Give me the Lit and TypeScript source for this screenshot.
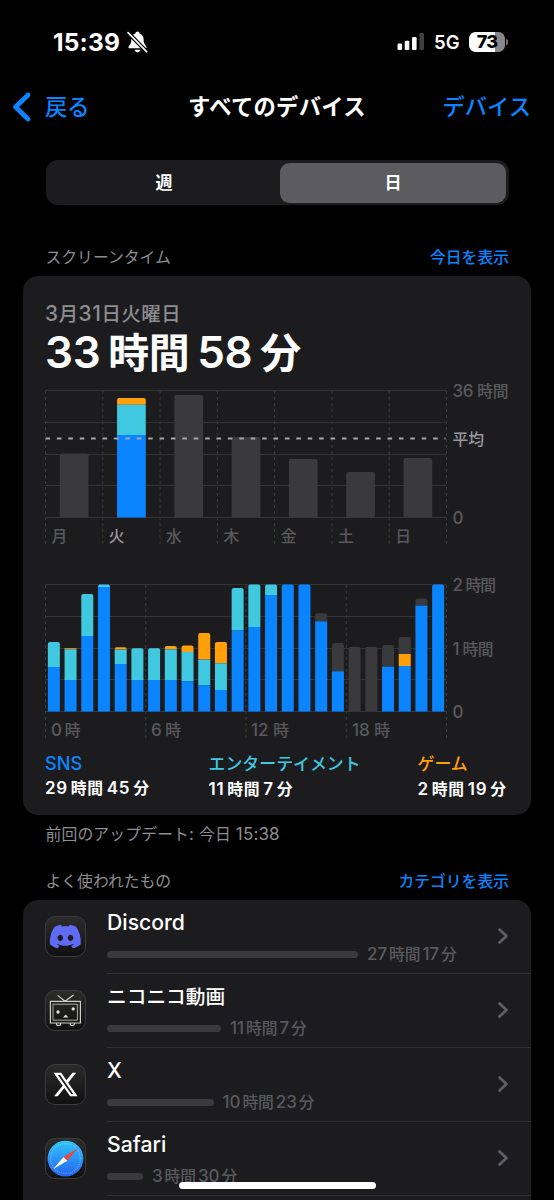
import { LitElement, html, svg, css } from "lit";
import { customElement, property } from "lit/decorators.js";

const BLUE = "#0a84ff";
const TEAL = "#40c8e0";
const ORANGE = "#ff9f0a";
const GRAY = "#3a3a3c";

type Segment = [top: number, color: string];

// Japanese runs are set slightly smaller than the Latin digits around them.
const split = (text: string) => text.match(/[\u3000-\u9fff]+|[^\u3000-\u9fff]+/g) ?? [];
const isJa = (run: string) => /[\u3000-\u9fff]/.test(run);
const mixed = (text: string) => split(text).map((r) => (isJa(r) ? html`<span class="ja">${r}</span>` : r));

const shared = css`
  .ja {
    font-size: 0.93em;
  }
`;

// Segments are listed from the top of the bar down; each runs to the baseline.
const drawBar = (x: number, width: number, base: number, segments: Segment[]) => {
  const r = 2;
  return segments.map(([top, color], i) => {
    const next = i + 1 < segments.length ? segments[i + 1][0] : base;
    if (i > 0 || next - top < r) {
      return svg`<rect x=${x} y=${top} width=${width} height=${next - top} fill=${color}></rect>`;
    }
    return svg`<path fill=${color} d=${`M${x} ${next}V${top + r}q0 ${-r} ${r} ${-r}H${x + width - r}q${r} 0 ${r} ${r}V${next}Z`}></path>`;
  });
};

interface Label {
  text: string;
  x: number;
  y: number;
  width: number;
  strong?: boolean;
}

@customElement("usage-chart")
class UsageChart extends LitElement {
  @property({ attribute: false }) bars: Segment[][] = [];
  @property({ attribute: false }) labels: Label[] = [];
  @property({ type: Number }) columns = 7;
  @property({ type: Number }) barWidth = 12;
  @property({ type: Number }) average = 0;

  static styles = [
    shared,
    css`
      :host {
        display: block;
      }
      svg {
        display: block;
        overflow: visible;
      }
      text {
        font: 500 17px Inter, "Noto Sans CJK JP", sans-serif;
        fill: #59595d;
      }
      text.strong {
        fill: #98989f;
      }
      .grid {
        stroke: #343436;
        stroke-width: 1;
      }
      .dashed {
        stroke: #3a3a3c;
        stroke-width: 1;
        stroke-dasharray: 3 3;
      }
      .average {
        stroke: #a5a5aa;
        stroke-width: 2;
        stroke-dasharray: 4.6 6.8;
      }
    `,
  ];

  render() {
    const left = 0.5;
    const width = 401;
    const base = 127.5;
    const step = width / this.columns;
    const slot = width / this.bars.length;
    return html`<svg width="464" height="156" viewBox="0 0 464 156">
      ${[0, 1, 2, 3, 4].map((i) => {
        const y = Math.round((i * 127) / 4) + 0.5;
        return svg`<line class="grid" x1=${left} x2=${left + width} y1=${y} y2=${y}></line>`;
      })}
      ${Array.from({ length: this.columns + 1 }, (_, i) => {
        const x = left + i * step;
        return svg`<line class="dashed" x1=${x} x2=${x} y1="1" y2="156"></line>`;
      })}
      ${this.bars.map((segments, i) =>
        drawBar(left + slot * i + (slot - this.barWidth) / 2, this.barWidth, base, segments)
      )}
      ${this.average
        ? svg`<line class="average" x1=${left} x2=${left + width - 1} y1=${this.average} y2=${this.average}></line>`
        : ""}
      ${this.labels.map(
        (l) => svg`<text class=${l.strong ? "strong" : ""} x=${l.x} y=${l.y} textLength=${l.width}>${split(l.text).map(
          (r) => (isJa(r) ? svg`<tspan class="ja">${r}</tspan>` : r)
        )}</text>`
      )}
    </svg>`;
  }
}

const discordIcon = svg`<path fill="#5f6bf5" transform="translate(4.9 5.1) scale(1.29)" d="M20.317 4.3698a19.7913 19.7913 0 0 0-4.8851-1.5152.0741.0741 0 0 0-.0785.0371c-.211.3753-.4447.8648-.6083 1.2495-1.8447-.2762-3.68-.2762-5.4868 0-.1636-.3933-.4058-.8742-.6177-1.2495a.077.077 0 0 0-.0785-.037 19.7363 19.7363 0 0 0-4.8852 1.515.0699.0699 0 0 0-.0321.0277C.5334 9.0458-.319 13.5799.0992 18.0578a.0824.0824 0 0 0 .0312.0561c2.0528 1.5076 4.0413 2.4228 5.9929 3.0294a.0777.0777 0 0 0 .0842-.0276c.4616-.6304.8731-1.2952 1.226-1.9942a.076.076 0 0 0-.0416-.1057c-.6528-.2476-1.2743-.5495-1.8722-.8923a.077.077 0 0 1-.0076-.1277c.1258-.0943.2517-.1923.3718-.2914a.0743.0743 0 0 1 .0776-.0105c3.9278 1.7933 8.18 1.7933 12.0614 0a.0739.0739 0 0 1 .0785.0095c.1202.099.246.1981.3728.2924a.077.077 0 0 1-.0066.1276 12.2986 12.2986 0 0 1-1.873.8914.0766.0766 0 0 0-.0407.1067c.3604.698.7719 1.3628 1.225 1.9932a.076.076 0 0 0 .0842.0286c1.961-.6067 3.9495-1.5219 6.0023-3.0294a.077.077 0 0 0 .0313-.0552c.5004-5.177-.8382-9.6739-3.5485-13.6604a.061.061 0 0 0-.0312-.0286zM8.02 15.3312c-1.1825 0-2.1569-1.0857-2.1569-2.419 0-1.3332.9555-2.4189 2.157-2.4189 1.2108 0 2.1757 1.0952 2.1568 2.419 0 1.3332-.9555 2.4189-2.1569 2.4189zm7.9748 0c-1.1825 0-2.1569-1.0857-2.1569-2.419 0-1.3332.9554-2.4189 2.1569-2.4189 1.2108 0 2.1757 1.0952 2.1568 2.419 0 1.3332-.946 2.4189-2.1568 2.4189Z"></path>`;

const niconicoIcon = svg`<g fill="none" stroke="#cfcfca" stroke-width="1.2" stroke-linejoin="round" stroke-linecap="round">
  <path d="M13 5.6L20 11.2L28.2 5.2"></path>
  <rect x="5.4" y="11.4" width="30" height="21.6"></rect>
  <rect x="8.4" y="14.2" width="24" height="16" stroke="#a9a9a5" stroke-width="1"></rect>
  <path d="M11.4 33.4a2.1 2.1 0 0 0 4.2 0M25.2 33.4a2.1 2.1 0 0 0 4.2 0"></path>
</g>
<g fill="#dededa"><circle cx="13" cy="22" r="1.7"></circle><circle cx="28.2" cy="18.9" r="1.7"></circle><path d="M18 27.6L20.7 24.4L23.4 27.6Z"></path></g>`;

const xIcon = svg`<path fill="#fff" transform="translate(8.6 7.6) scale(1 1.08)" d="M18.901 1.153h3.68l-8.04 9.19L24 22.846h-7.406l-5.8-7.584-6.638 7.584H.474l8.6-9.83L0 1.154h7.594l5.243 6.932ZM17.61 20.644h2.039L6.486 3.24H4.298Z"></path>`;

const safariIcon = svg`<defs><linearGradient id="sea" x1="0" y1="0" x2="0" y2="1"><stop offset="0" stop-color="#31c6fb"></stop><stop offset="1" stop-color="#2563f2"></stop></linearGradient></defs>
<circle cx="20.5" cy="20.6" r="17.9" fill="url(#sea)"></circle>
<circle cx="20.5" cy="20.6" r="15" fill="none" stroke="#9bdcff" stroke-opacity=".6" stroke-width="1.5" stroke-dasharray=".7 1.26"></circle>
<path fill="#fff" d="M8.2 31L18.6 18.9L22.4 22.8Z"></path>
<path fill="#f2453d" d="M32.8 10.2L18.6 18.9L22.4 22.8Z"></path>`;

const apps = [
  { name: "Discord", bar: 251, time: "27 時間 17 分", icon: discordIcon },
  { name: "ニコニコ動画", bar: 114, time: "11 時間 7 分", icon: niconicoIcon },
  { name: "X", bar: 106.5, time: "10 時間 23 分", icon: xIcon },
  { name: "Safari", bar: 36, time: "3 時間 30 分", icon: safariIcon },
];

const week: Segment[][] = [
  [[63.5, GRAY]],
  [[8, ORANGE], [14.7, TEAL], [45, BLUE]],
  [[5, GRAY]],
  [[47, GRAY]],
  [[69, GRAY]],
  [[82, GRAY]],
  [[68, GRAY]],
];

const day: Segment[][] = [
  [[58, TEAL], [83, BLUE]],
  [[64.2, ORANGE], [65.3, TEAL], [96, BLUE]],
  [[10, TEAL], [52, BLUE]],
  [[0.6, TEAL], [3, BLUE]],
  [[63.3, ORANGE], [65.6, TEAL], [80, BLUE]],
  [[64.3, TEAL], [96, BLUE]],
  [[64.3, TEAL], [96, BLUE]],
  [[62, ORANGE], [65.3, TEAL], [96, BLUE]],
  [[61.6, ORANGE], [68, TEAL], [97.2, BLUE]],
  [[49, ORANGE], [75.6, TEAL], [101.3, BLUE]],
  [[58, ORANGE], [79.3, TEAL], [106, BLUE]],
  [[4, TEAL], [46.6, BLUE]],
  [[0.6, TEAL], [43, BLUE]],
  [[0.6, TEAL], [11, BLUE]],
  [[0.6, BLUE]],
  [[0.6, BLUE]],
  [[29.3, GRAY], [37.3, BLUE]],
  [[59, GRAY], [87.3, BLUE]],
  [[63, GRAY]],
  [[63, GRAY]],
  [[61, GRAY], [82.6, BLUE]],
  [[53, GRAY], [70, ORANGE], [82, BLUE]],
  [[14.6, GRAY], [21.6, BLUE]],
  [[0.6, BLUE]],
];

const weekLabels: Label[] = [
  ...[..."月火水木金土日"].map((text, i) => ({ text, x: 6.5 + i * 57.3, y: 152, width: 15.8, strong: i === 1 })),
  { text: "36 時間", x: 407.5, y: 7, width: 56 },
  { text: "平均", x: 407.5, y: 54.5, width: 31.6, strong: true },
  { text: "0", x: 407.5, y: 134, width: 11 },
];

const dayLabels: Label[] = [
  { text: "0 時", x: 6, y: 152, width: 29.5 },
  { text: "6 時", x: 106, y: 152, width: 30 },
  { text: "12 時", x: 206, y: 152, width: 38 },
  { text: "18 時", x: 307, y: 152, width: 38 },
  { text: "2 時間", x: 407.5, y: 7, width: 43.5 },
  { text: "1 時間", x: 407.5, y: 70.5, width: 41 },
  { text: "0", x: 407.5, y: 134, width: 11 },
];

@customElement("app-root")
class AppRoot extends LitElement {
  static styles = [
    shared,
    css`
      :host {
        display: block;
        position: relative;
        box-sizing: border-box;
        width: 554px;
        height: 1200px;
        overflow: hidden;
        background: #000;
        color: #fff;
        font: 400 17px/24px Inter, "Noto Sans CJK JP", sans-serif;
        white-space: nowrap;
      }
      svg {
        display: block;
        flex: none;
      }
      .status {
        display: flex;
        align-items: center;
        height: 83px;
        padding: 0 46px 0 53px;
      }
      .clock {
        font-size: 24.5px;
        font-weight: 700;
        letter-spacing: 0.2px;
        width: 74px;
      }
      .signal {
        margin-left: auto;
      }
      .net {
        font-size: 18.5px;
        font-weight: 600;
        width: 35px;
        margin-left: 9px;
      }
      .battery {
        display: flex;
        align-items: center;
        gap: 1px;
      }
      .cell {
        width: 36px;
        height: 20px;
        border-radius: 6.5px;
        background: linear-gradient(90deg, #fff 73%, #87878a 73%);
        color: #000;
        font-size: 18px;
        font-weight: 800;
        line-height: 20px;
        text-align: center;
        letter-spacing: -0.8px;
      }
      .tip {
        width: 2px;
        height: 6px;
        border-radius: 0 2px 2px 0;
        background: #77777a;
      }
      .nav {
        display: grid;
        grid-template-columns: 1fr auto 1fr;
        align-items: center;
        height: 48px;
        padding: 0 23px 0 12px;
        font-size: 24px;
      }
      .back,
      .devices {
        display: flex;
        align-items: center;
        color: #0a84ff;
        font-weight: 500;
      }
      .back {
        gap: 14px;
      }
      .devices {
        justify-content: flex-end;
      }
      .title {
        padding-left: 11px;
        font-weight: 600;
        letter-spacing: 0.3px;
      }
      .segmented {
        display: flex;
        box-sizing: border-box;
        width: 463px;
        height: 45px;
        margin: 29px 0 0 45.5px;
        padding: 2.5px;
        border-radius: 12px;
        background: #1c1c1f;
        font-size: 18.4px;
        font-weight: 600;
      }
      .option {
        display: flex;
        flex: 1;
        align-items: center;
        justify-content: center;
        border-radius: 9.5px;
        padding-top: 1px;
      }
      .option.on {
        flex: none;
        width: 226px;
        background: #5b5b60;
      }
      .header {
        display: flex;
        justify-content: space-between;
        padding: 0 45px 0 45.5px;
        color: #8d8d93;
      }
      .link {
        color: #0a84ff;
        font-weight: 500;
      }
      .header.first {
        margin-top: 40px;
      }
      .header.second {
        margin-top: 22px;
      }
      .card {
        box-sizing: border-box;
        width: 508px;
        margin-left: 23px;
        border-radius: 15px;
        background: #1c1c1e;
      }
      .summary {
        height: 539px;
        margin-top: 6px;
        padding: 25px 22px 0;
      }
      .date {
        font-size: 20.8px;
        line-height: 26px;
        font-weight: 500;
        color: #8d8d93;
        letter-spacing: 0.6px;
      }
      .total {
        height: 62.5px;
        font-size: 44px;
        font-weight: 600;
        line-height: 51px;
        word-spacing: -3px;
        letter-spacing: -0.3px;
      }
      .hours {
        margin-top: 38px;
      }
      .legend {
        display: grid;
        grid-template-columns: 163.5px 209px auto;
        margin-top: 11px;
      }
      .category {
        font-size: 18.2px;
        line-height: 25px;
        font-weight: 500;
      }
      .category.sns {
        color: #0a84ff;
      }
      .category.fun {
        color: #40c8e0;
      }
      .category.game {
        color: #ff9f0a;
      }
      .amount {
        font-weight: 600;
        line-height: 25px;
        letter-spacing: 0.7px;
        word-spacing: -2px;
      }
      .updated {
        margin-top: 7px;
        padding-left: 45.5px;
        color: #8d8d93;
        letter-spacing: 0.15px;
      }
      .apps {
        height: 320px;
        margin-top: 6px;
        border-radius: 15px 15px 0 0;
      }
      .row {
        display: flex;
        height: 74px;
        padding-left: 22px;
      }
      .icon {
        margin-top: 16px;
      }
      .body {
        display: flex;
        flex: 1;
        box-sizing: border-box;
        margin-left: 21px;
        border-bottom: 1px solid #303033;
      }
      .info {
        flex: 1;
      }
      .name {
        height: 42px;
        padding-top: 9px;
        box-sizing: border-box;
        font-size: 21.2px;
        line-height: 26px;
        font-weight: 500;
      }
      .usage {
        display: flex;
        align-items: center;
        gap: 9px;
      }
      .bar {
        height: 7.5px;
        border-radius: 4px;
        background: #3a3a3c;
      }
      .time {
        color: #59595d;
        font-weight: 500;
        letter-spacing: -0.1px;
        word-spacing: -2.4px;
      }
      .chevron {
        margin: 27px 22px 0 0;
      }
      .home {
        position: absolute;
        left: 178.5px;
        bottom: 11px;
        width: 197.5px;
        height: 7px;
        border-radius: 4px;
        background: #fff;
      }
    `,
  ];

  render() {
    return html`
      <div class="status">
        <div class="clock">15:39</div>
        <svg width="21" height="22" viewBox="0 0 21 22">
          <path fill="#fff" d="M10.5.6c1.2 0 2 .8 2.1 1.9 2.6.8 4 3 4 5.8 0 3.600.8 4.800 2.700 7.200.6.8.2 1.800-.9 1.800H2.600c-1.100 0-1.500-1-.9-1.800C3.600 13.100 4.400 11.900 4.400 8.300c0-2.800 1.400-5 4-5.800C8.500 1.400 9.300.6 10.500.6ZM7.500 18.800h6c-.3 1.600-1.500 2.500-3 2.500s-2.700-.9-3-2.500Z"></path>
          <path stroke="#000" stroke-width="4" d="M.6 1.200L20 21"></path>
          <path stroke="#fff" stroke-width="1.6" stroke-linecap="round" d="M1 1.600L19.600 20.600"></path>
        </svg>
        <svg class="signal" width="28" height="18" viewBox="0 0 28 18">
          <g fill="#fff">
            <rect x="0.500" y="10.500" width="4.600" height="6.500" rx="1.300"></rect>
            <rect x="7.700" y="7.700" width="4.600" height="9.300" rx="1.300"></rect>
            <rect x="15" y="4" width="4.600" height="13" rx="1.300"></rect>
          </g>
          <rect x="22.400" y="0" width="4.600" height="17" rx="1.300" fill="#3f3f41"></rect>
        </svg>
        <div class="net">5G</div>
        <div class="battery"><div class="cell">73</div><div class="tip"></div></div>
      </div>

      <div class="nav">
        <div class="back">
          <svg width="19" height="30" viewBox="0 0 19 30">
            <path d="M16 3L3.600 15L16 27" fill="none" stroke="#0a84ff" stroke-width="4.700" stroke-linecap="round" stroke-linejoin="round"></path>
          </svg>
          ${mixed("戻る")}
        </div>
        <div class="title">${mixed("すべてのデバイス")}</div>
        <div class="devices">${mixed("デバイス")}</div>
      </div>

      <div class="segmented">
        <div class="option">${mixed("週")}</div>
        <div class="option on">${mixed("日")}</div>
      </div>

      <div class="header first">
        <div>${mixed("スクリーンタイム")}</div>
        <div class="link">${mixed("今日を表示")}</div>
      </div>

      <div class="card summary">
        <div class="date">${mixed("3月31日火曜日")}</div>
        <div class="total">${mixed("33 時間 58 分")}</div>
        <usage-chart .bars=${week} .labels=${weekLabels} .columns=${7} .barWidth=${28.7} .average=${48.5}></usage-chart>
        <usage-chart class="hours" .bars=${day} .labels=${dayLabels} .columns=${4} .barWidth=${12}></usage-chart>
        <div class="legend">
          <div>
            <div class="category sns">SNS</div>
            <div class="amount">${mixed("29 時間 45 分")}</div>
          </div>
          <div>
            <div class="category fun">${mixed("エンターテイメント")}</div>
            <div class="amount">${mixed("11 時間 7 分")}</div>
          </div>
          <div>
            <div class="category game">${mixed("ゲーム")}</div>
            <div class="amount">${mixed("2 時間 19 分")}</div>
          </div>
        </div>
      </div>
      <div class="updated">${mixed("前回のアップデート: 今日 15:38")}</div>

      <div class="header second">
        <div>${mixed("よく使われたもの")}</div>
        <div class="link">${mixed("カテゴリを表示")}</div>
      </div>

      <div class="card apps">
        ${apps.map(
          (app) => html`<div class="row">
            <svg class="icon" width="41" height="41" viewBox="0 0 41 41">
              <defs>
                <linearGradient id="tile" x1="0" y1="0" x2="0" y2="1">
                  <stop offset="0" stop-color="#2c2c2d"></stop>
                  <stop offset="1" stop-color="#101011"></stop>
                </linearGradient>
              </defs>
              <rect x="0.5" y="0.5" width="40" height="40" rx="9.5" fill="url(#tile)" stroke="#3c3c3e"></rect>
              ${app.icon}
            </svg>
            <div class="body">
              <div class="info">
                <div class="name">${mixed(app.name)}</div>
                <div class="usage">
                  <div class="bar" style="width:${app.bar}px"></div>
                  <div class="time">${mixed(app.time)}</div>
                </div>
              </div>
              <svg class="chevron" width="12" height="18" viewBox="0 0 12 18">
                <path d="M2.500 2.500L9.500 9L2.500 15.500" fill="none" stroke="#5f5f63" stroke-width="2.800" stroke-linecap="round" stroke-linejoin="round"></path>
              </svg>
            </div>
          </div>`
        )}
      </div>
      <div class="home"></div>
    `;
  }
}
